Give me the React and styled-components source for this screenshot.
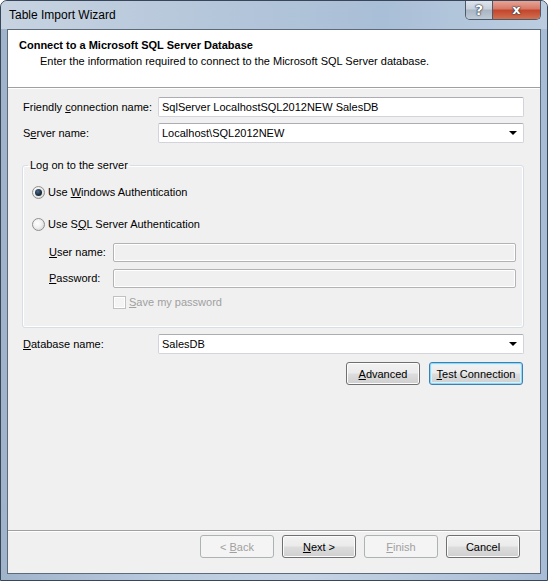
import React from "react";
import styled, { createGlobalStyle, css } from "styled-components";

const Global = createGlobalStyle`
  html, body { margin: 0; padding: 0; background: #ffffff; }
  body { font-family: "Liberation Sans", Arial, sans-serif; font-size: 11px; color: #000; }
  * { box-sizing: border-box; }
`;

const Window = styled.div`
  width: 548px;
  height: 581px;
  display: flex;
  flex-direction: column;
  border: 1px solid #39465a;
  border-radius: 7px 7px 0 0;
  background: linear-gradient(to right, #9fb3cb 0%, #b9cbdf 30%, #c5d4e5 55%, #a8bdd5 100%);
  overflow: hidden;
`;

const TitleBar = styled.div`
  height: 28px;
  flex: none;
  display: flex;
  align-items: flex-start;
  padding: 0 6px 0 8px;
  background: linear-gradient(to right, #c7d3e1 0%, #b4c6da 40%, #a9bfd7 70%, #bccde0 100%);
`;

const Title = styled.div`
  font-size: 12px;
  line-height: 14px;
  margin-top: 7px;
  color: #000;
`;

const Caption = styled.div`
  margin-left: auto;
  margin-top: -1px;
  display: flex;
  border: 1px solid #4d5a6c;
  border-top: none;
  border-radius: 0 0 5px 5px;
  overflow: hidden;
`;

const CaptionButton = styled.div`
  height: 19px;
  width: ${(p) => p.$w}px;
  display: flex;
  align-items: center;
  justify-content: center;
  color: #fff;
  font-family: "DejaVu Sans", sans-serif;
  font-weight: bold;
  font-size: ${(p) => p.$fs}px;
  line-height: 1;
  text-shadow: 0 0 1px #2b3440, 0 0 1px #2b3440, 0 0 2px #2b3440;
  ${(p) =>
    p.$close
      ? css`
          background: linear-gradient(#e9a99c 0%, #d77a68 45%, #c4462d 55%, #d0714f 100%);
        `
      : css`
          background: linear-gradient(#e1e7ee 0%, #c8d1dc 45%, #aab6c4 55%, #bfcad6 100%);
          border-right: 1px solid #4d5a6c;
        `}
`;

const Client = styled.div`
  flex: 1;
  margin: 0 6px 6px 6px;
  border: 1px solid #5d6a79;
  background: #f0f0f0;
  display: flex;
  flex-direction: column;
`;

const Header = styled.div`
  height: 58px;
  flex: none;
  background: #ffffff;
  padding: 9px 0 0 11px;
  border-bottom: 1px solid #a0a0a0;
`;

const HeaderTitle = styled.div`
  font-weight: bold;
  font-size: 11px;
  line-height: 13px;
`;

const HeaderText = styled.div`
  line-height: 13px;
  margin: 3px 0 0 21px;
`;

const Etch = styled.div`
  height: 1px;
  flex: none;
  background: #ffffff;
`;

const Body = styled.div`
  flex: 1;
  display: flex;
  flex-direction: column;
  padding: 8px 16px 0 15px;
`;

const FieldRow = styled.div`
  display: grid;
  grid-template-columns: ${(p) => p.$label || 135}px 1fr;
  align-items: center;
  margin-top: ${(p) => p.$mt || 0}px;
  margin-left: ${(p) => p.$ml || 0}px;
`;

const Label = styled.span`
  white-space: nowrap;
  line-height: 13px;
`;

const Key = styled.u`
  text-decoration: underline;
  text-underline-offset: 1px;
`;

const TextBox = styled.div`
  height: ${(p) => p.$h || 20}px;
  display: flex;
  align-items: center;
  padding: 0 3px;
  border: 1px solid #d2d4d9;
  border-top-color: #abadb3;
  border-radius: 2px;
  background: ${(p) => (p.$disabled ? "#f0f0f0" : "#ffffff")};
  ${(p) =>
    p.$disabled &&
    css`
      border: 1px solid #b3b3b3;
      box-shadow: inset 0 0 0 1px #ffffff;
    `}
  white-space: nowrap;
  overflow: hidden;
`;

const ComboArrow = styled.span`
  margin-left: auto;
  margin-right: 3px;
  width: 0;
  height: 0;
  border-left: 4px solid transparent;
  border-right: 4px solid transparent;
  border-top: 4px solid #000;
`;

const Group = styled.fieldset`
  margin: 16px 0 0 -1px;
  padding: 12px 7px 17px 9px;
  border: 1px solid #d5dfe5;
  border-radius: 3px;
  box-shadow: inset 0 0 0 1px #ffffff;
  display: flex;
  flex-direction: column;
  min-inline-size: 0;
`;

const Legend = styled.legend`
  padding: 0 2px;
  margin-left: -4px;
  line-height: 13px;
`;

const OptionRow = styled.label`
  display: flex;
  align-items: center;
  gap: 3px;
  height: 16px;
  margin-top: ${(p) => p.$mt || 0}px;
  margin-left: ${(p) => p.$ml || 0}px;
  color: ${(p) => (p.$disabled ? "#a0a0a0" : "#000")};
`;

const Radio = styled.span`
  width: 13px;
  height: 13px;
  border-radius: 50%;
  border: 1px solid #8e8f8f;
  background: radial-gradient(circle at 40% 40%, #ffffff 0%, #f0f0f0 45%, #c9cacb 100%);
  display: flex;
  align-items: center;
  justify-content: center;
  flex: none;
  &::after {
    content: "";
    display: ${(p) => (p.$checked ? "block" : "none")};
    width: 7px;
    height: 7px;
    border-radius: 50%;
    background: radial-gradient(circle at 40% 35%, #4a6a8a 0%, #1b2c3d 60%, #0c1620 100%);
  }
`;

const Check = styled.span`
  width: 13px;
  height: 13px;
  flex: none;
  border: 1px solid #c1c1c1;
  background: #f4f4f4;
  box-shadow: inset 0 0 0 1px #ffffff;
`;

const ButtonRow = styled.div`
  display: flex;
  justify-content: flex-end;
  gap: ${(p) => p.$gap || 8}px;
  margin-top: ${(p) => p.$mt || 0}px;
  margin-right: ${(p) => p.$mr || 0}px;
`;

const Button = styled.div`
  width: ${(p) => p.$w || 74}px;
  height: 23px;
  display: flex;
  align-items: center;
  justify-content: center;
  border: 1px solid #707070;
  border-radius: 3px;
  background: linear-gradient(#f2f2f2 0%, #ebebeb 48%, #dddddd 52%, #cfcfcf 100%);
  box-shadow: inset 0 0 0 1px #fcfcfc;
  white-space: nowrap;
  ${(p) =>
    p.$focused &&
    css`
      border-color: #3c7fb1;
      box-shadow: inset 0 0 0 1px #8fd7f7, inset 0 0 0 2px #d8f1fc;
    `}
  ${(p) =>
    p.$disabled &&
    css`
      border-color: #adb2b5;
      background: #f4f4f4;
      box-shadow: none;
      color: #a0a0a0;
    `}
`;

const Footer = styled.div`
  flex: none;
  border-top: 1px solid #a0a0a0;
`;

const FooterInner = styled.div`
  border-top: 1px solid #ffffff;
  padding: 3px 0 15px 0;
`;

export default function App() {
  return (
    <>
      <Global />
      <Window>
        <TitleBar>
          <Title>Table Import Wizard</Title>
          <Caption>
            <CaptionButton $w={27} $fs={14}>?</CaptionButton>
            <CaptionButton $w={47} $fs={13} $close>x</CaptionButton>
          </Caption>
        </TitleBar>
        <Client>
          <Header>
            <HeaderTitle>Connect to a Microsoft SQL Server Database</HeaderTitle>
            <HeaderText>
              Enter the information required to connect to the Microsoft SQL Server database.
            </HeaderText>
          </Header>
          <Etch />
          <Body>
            <FieldRow>
              <Label>
                Friendly <Key>c</Key>onnection name:
              </Label>
              <TextBox>SqlServer LocalhostSQL2012NEW SalesDB</TextBox>
            </FieldRow>
            <FieldRow $mt={6}>
              <Label>
                S<Key>e</Key>rver name:
              </Label>
              <TextBox>
                Localhost\SQL2012NEW
                <ComboArrow />
              </TextBox>
            </FieldRow>

            <Group>
              <Legend>Log on to the server</Legend>
              <OptionRow>
                <Radio $checked />
                <span>
                  Use <Key>W</Key>indows Authentication
                </span>
              </OptionRow>
              <OptionRow $mt={16}>
                <Radio />
                <span>
                  Use S<Key>Q</Key>L Server Authentication
                </span>
              </OptionRow>
              <FieldRow $label={64} $ml={17} $mt={11}>
                <Label>
                  <Key>U</Key>ser name:
                </Label>
                <TextBox $disabled $h={19} />
              </FieldRow>
              <FieldRow $label={64} $ml={17} $mt={7}>
                <Label>
                  <Key>P</Key>assword:
                </Label>
                <TextBox $disabled $h={19} />
              </FieldRow>
              <OptionRow $ml={81} $mt={6} $disabled>
                <Check />
                <span>
                  <Key>S</Key>ave my password
                </span>
              </OptionRow>
            </Group>

            <FieldRow $mt={6}>
              <Label>
                <Key>D</Key>atabase name:
              </Label>
              <TextBox>
                SalesDB
                <ComboArrow />
              </TextBox>
            </FieldRow>
            <ButtonRow $mt={8} $gap={9} $mr={1}>
              <Button $w={74}>
                <span>
                  <Key>A</Key>dvanced
                </span>
              </Button>
              <Button $w={94} $focused>
                <span>
                  <Key>T</Key>est Connection
                </span>
              </Button>
            </ButtonRow>
          </Body>
          <Footer>
            <FooterInner>
              <ButtonRow $gap={8} $mr={20}>
                <Button $disabled>
                  <span>
                    &lt; <Key>B</Key>ack
                  </span>
                </Button>
                <Button>
                  <span>
                    <Key>N</Key>ext &gt;
                  </span>
                </Button>
                <Button $disabled>
                  <span>
                    <Key>F</Key>inish
                  </span>
                </Button>
                <Button>Cancel</Button>
              </ButtonRow>
            </FooterInner>
          </Footer>
        </Client>
      </Window>
    </>
  );
}
